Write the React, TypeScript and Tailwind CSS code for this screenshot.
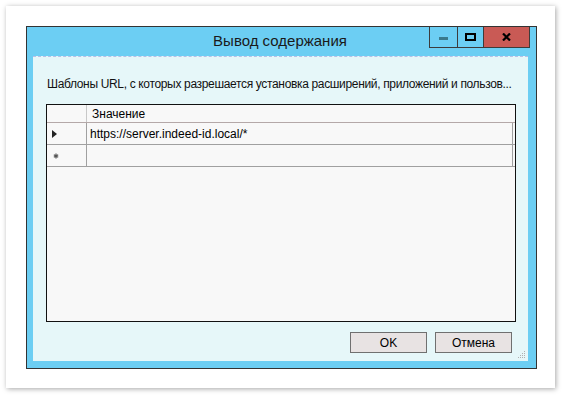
import React from "react";

const font = { fontFamily: '"Liberation Sans", Arial, sans-serif' };

function TitleButtons() {
  return (
    <div className="flex h-[21px] self-start mr-[6px]">
      <div className="w-[29px] h-[21px] border-l border-r border-b border-[#3c3c3c] flex items-center justify-center">
        <div className="w-[9px] h-[3px] bg-[#3a7a8c] mt-[3px]" />
      </div>
      <div className="w-[26px] h-[21px] border-r border-b border-[#3c3c3c] flex items-center justify-center">
        <div className="w-[11px] h-[8px] border-2 border-black" />
      </div>
      <div className="w-[46px] h-[21px] border-r border-b border-[#3c3c3c] bg-[#c95a55] flex items-center justify-center">
        <svg width="9" height="8" viewBox="0 0 9 8">
          <path d="M1 0.5 L8 7.5 M8 0.5 L1 7.5" stroke="#000" strokeWidth="2.2" />
        </svg>
      </div>
    </div>
  );
}

function GridRow({ marker, value }: { marker: React.ReactNode; value?: string }) {
  return (
    <div className="flex h-[22px] border-b border-[#a0a0a0]">
      <div className="w-[40px] shrink-0 border-r border-[#a0a0a0] flex items-center pl-[5px]">
        {marker}
      </div>
      <div className="flex-1 flex items-center pl-[3px] text-[12px] text-black mr-[2px] border-r border-[#a0a0a0]">
        {value}
      </div>
    </div>
  );
}

export default function App() {
  return (
    <div className="w-[562px] h-[395px] bg-white pt-[6px] pl-[6px]" style={font}>
      <div className="w-[549px] h-[382px] bg-white shadow-[1px_1px_5px_rgba(0,0,0,0.35)] pt-[20px] pl-[20px]">
        <div className="w-[511px] h-[343px] border border-[#333333] bg-[#6ccef3] flex flex-col">
          {/* title bar */}
          <div className="h-[29px] flex items-start shrink-0">
            <div className="flex-1 h-[29px] flex items-center justify-center pl-[104px] text-[15px] text-[#1a1a1a]">
              Вывод содержания
            </div>
            <TitleButtons />
          </div>

          {/* client area */}
          <div className="flex-1 pl-[6px] pr-[8px] pb-[7px] flex">
            <div className="flex-1 bg-[#e6f7f9] border-t border-dashed border-[#b9bfe6] flex flex-col relative">
              <div className="pl-[14px] pt-[18px] h-[47px] text-[12px] text-[#111] whitespace-nowrap tracking-[-0.34px]">
                Шаблоны URL, с которых разрешается установка расширений, приложений и пользов...
              </div>
              <div className="ml-[13px] w-[470px] h-[218px] border border-[#111] bg-[#f8f8f8] flex flex-col">
                <div className="flex h-[18px] border-b border-[#b4a8a8]">
                  <div className="w-[40px] shrink-0 border-r border-[#c8c8c8]" />
                  <div className="flex-1 flex items-center pl-[5px] text-[12px] text-black">Значение</div>
                </div>
                <GridRow
                  marker={
                    <svg width="5" height="8" viewBox="0 0 5 8">
                      <path d="M0 0 L5 4 L0 8 Z" fill="#222" />
                    </svg>
                  }
                  value="https://server.indeed-id.local/*"
                />
                <GridRow
                  marker={
                    <svg width="6" height="6" viewBox="0 0 6 6" className="ml-[1px]">
                      <path d="M3 0.5 V5.5 M0.8 1.8 L5.2 4.2 M5.2 1.8 L0.8 4.2" stroke="#555" strokeWidth="1.2" />
                    </svg>
                  }
                />
              </div>
              <div className="flex justify-end gap-[8px] pr-[16px] pt-[10px]">
                <button className="w-[77px] h-[21px] border border-[#707070] bg-[#e8e3e3] text-[12px] text-black">
                  OK
                </button>
                <button className="w-[77px] h-[21px] border border-[#707070] bg-[#e8e3e3] text-[12px] text-black">
                  Отмена
                </button>
              </div>
              <svg width="8" height="8" viewBox="0 0 8 8" className="absolute right-[2px] bottom-[2px]">
                <rect x="6" y="0" width="1" height="1" fill="#b0b0b0" />
                <rect x="4" y="2" width="1" height="1" fill="#b0b0b0" />
                <rect x="6" y="2" width="1" height="1" fill="#b0b0b0" />
                <rect x="2" y="4" width="1" height="1" fill="#b0b0b0" />
                <rect x="4" y="4" width="1" height="1" fill="#b0b0b0" />
                <rect x="6" y="4" width="1" height="1" fill="#b0b0b0" />
                <rect x="0" y="6" width="1" height="1" fill="#b0b0b0" />
                <rect x="2" y="6" width="1" height="1" fill="#b0b0b0" />
                <rect x="4" y="6" width="1" height="1" fill="#b0b0b0" />
                <rect x="6" y="6" width="1" height="1" fill="#b0b0b0" />
              </svg>
            </div>
          </div>
        </div>
      </div>
    </div>
  );
}
